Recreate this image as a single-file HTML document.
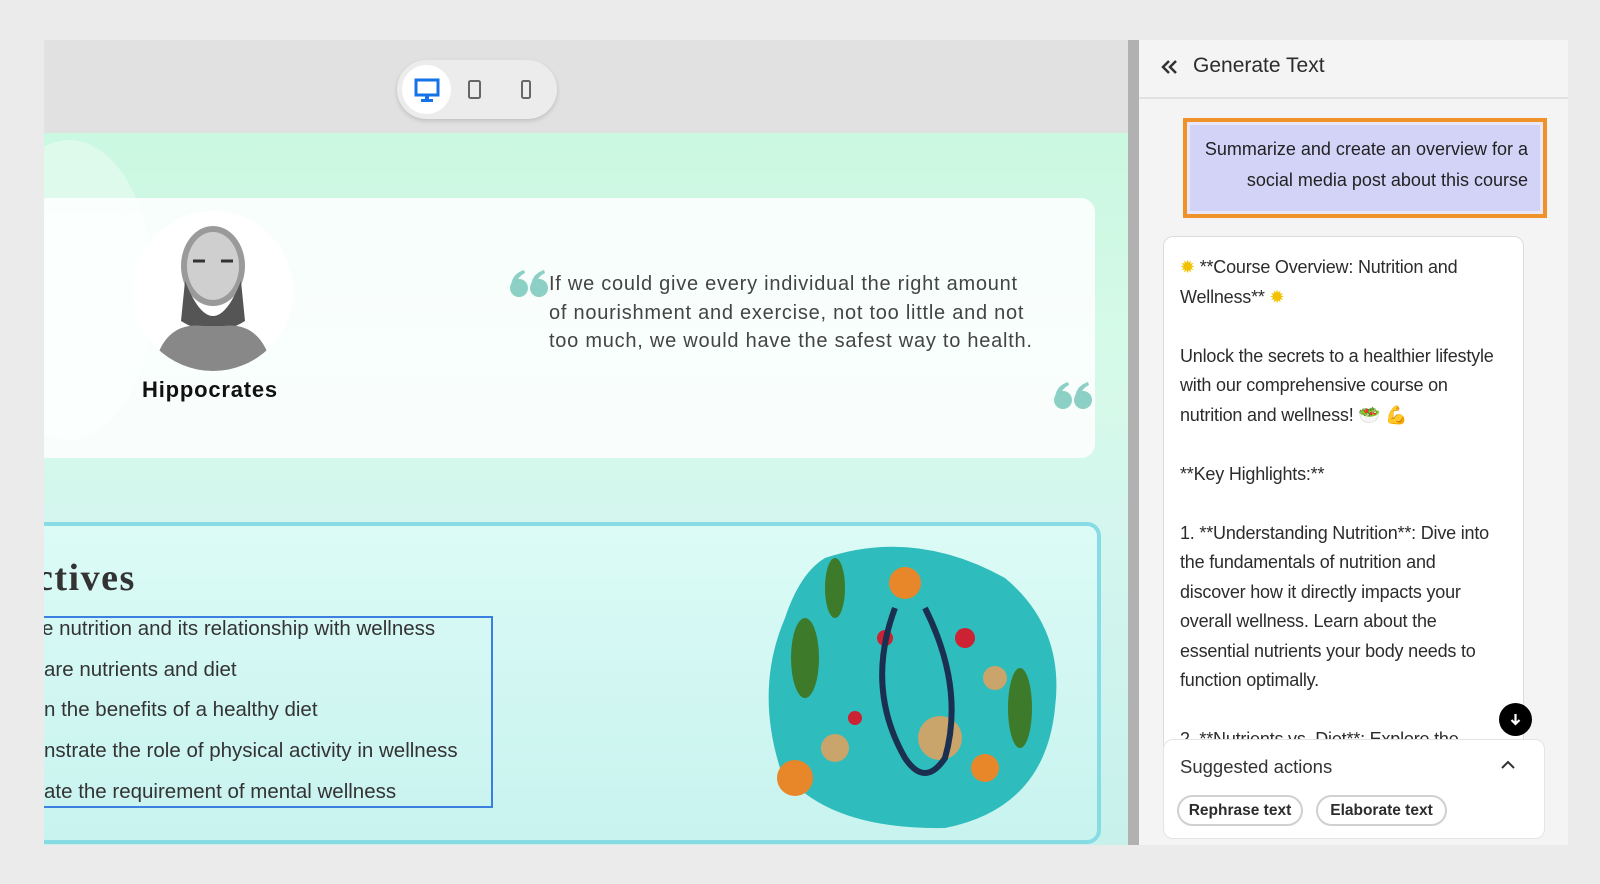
<!DOCTYPE html>
<html><head><meta charset="utf-8"><style>
*{box-sizing:border-box;margin:0;padding:0}
body{width:1600px;height:884px;background:#ebebeb;position:relative;overflow:hidden;font-family:"Liberation Sans",sans-serif}
.abs{position:absolute}
#canvas{left:44px;top:40px;width:1084px;height:805px;overflow:hidden;background:linear-gradient(180deg,#c6f7dd 0%,#d6fae9 40%,#d4f6ee 60%,#c8f1ec 100%)}
#toolbar{left:0;top:0;width:1084px;height:93px;background:#e1e1e1}
.pill{left:353px;top:20px;width:160px;height:59px;border-radius:30px;background:#ececec;box-shadow:0 2px 5px rgba(0,0,0,.15)}
.q{color:#444;font-size:20px;line-height:28.5px;letter-spacing:.75px;white-space:nowrap}
.li{font-size:20.5px;color:#333;left:0;white-space:nowrap}
.side{left:1139px;top:40px;width:429px;height:805px;background:#f4f4f4}
.st{font-size:18px;color:#2c2c2c;line-height:29.5px}
</style></head><body>
<div class="abs" id="canvas">
  <div class="abs" style="left:-60px;top:100px;width:170px;height:300px;border-radius:50%;background:rgba(255,255,255,.35)"></div>
  <div class="abs" id="toolbar">
    <div class="abs pill">
      <div class="abs" style="left:5px;top:5px;width:49px;height:49px;border-radius:50%;background:#fff"></div>
      <svg class="abs" style="left:16px;top:16px" width="28" height="28" viewBox="0 0 28 28"><rect x="3" y="4" width="22" height="15" fill="none" stroke="#1473e6" stroke-width="3"/><rect x="12" y="19" width="4" height="4" fill="#1473e6"/><rect x="8" y="23" width="12" height="3" fill="#1473e6"/></svg>
      <svg class="abs" style="left:70px;top:19px" width="16" height="22"><rect x="2" y="2" width="11" height="17" rx="1.5" fill="none" stroke="#666" stroke-width="2"/></svg>
      <svg class="abs" style="left:122px;top:19px" width="14" height="22"><rect x="3" y="2" width="8" height="17" rx="1.5" fill="none" stroke="#666" stroke-width="2"/></svg>
    </div>
  </div>
  <div class="abs" style="left:-10px;top:158px;width:1061px;height:260px;border-radius:14px;background:rgba(255,255,255,.85)"></div>
  <div class="abs" style="left:89px;top:171px;width:160px;height:160px;border-radius:50%;background:#fff;overflow:hidden">
    <svg width="160" height="160" viewBox="0 0 160 160"><ellipse cx="80" cy="55" rx="32" ry="40" fill="#9a9a9a"/><ellipse cx="80" cy="55" rx="26" ry="34" fill="#cfcfcf"/><path d="M52 70 Q80 140 108 70 L112 110 Q80 130 48 110Z" fill="#555"/><path d="M20 160 Q30 110 70 115 L90 115 Q130 110 140 160Z" fill="#888"/><path d="M60 50 h12 M88 50 h12" stroke="#333" stroke-width="3"/></svg>
  </div>
  <div class="abs" style="left:98px;top:337px;font-size:22px;font-weight:bold;color:#111;letter-spacing:.8px">Hippocrates</div>
  <svg class="abs" style="left:466px;top:230px" width="40" height="28" viewBox="0 0 40 28"><g fill="#8ccfc4"><circle cx="9" cy="18" r="9"/><path d="M1 18 Q1 4 14 0 L15 3 Q7 7 7 14Z"/><circle cx="29" cy="18" r="9"/><path d="M21 18 Q21 4 34 0 L35 3 Q27 7 27 14Z"/></g></svg>
  <div class="abs q" style="left:505px;top:230px">If we could give every individual the right amount<br>of nourishment and exercise, not too little and not<br>too much, we would have the safest way to health.</div>
  <svg class="abs" style="left:1010px;top:342px" width="40" height="28" viewBox="0 0 40 28"><g fill="#8ccfc4"><circle cx="9" cy="18" r="9"/><path d="M1 18 Q1 4 14 0 L15 3 Q7 7 7 14Z"/><circle cx="29" cy="18" r="9"/><path d="M21 18 Q21 4 34 0 L35 3 Q27 7 27 14Z"/></g></svg>
  <div class="abs" style="left:-20px;top:482px;width:1077px;height:322px;border:4px solid #86dbe4;border-radius:14px;background:linear-gradient(180deg,#dcfbf6,#c8f3ef)"></div>
  <div class="abs" style="left:-8px;top:516px;font-size:38px;font-weight:bold;color:#333;font-family:'Liberation Serif',serif;letter-spacing:1.5px">ctives</div>
  <div class="abs" style="left:-4px;top:576px;width:453px;height:192px;border:2px solid #3b7fe0"></div>
  <div class="abs li" style="top:577px;left:-2px">e nutrition and its relationship with wellness</div>
  <div class="abs li" style="top:618px">are nutrients and diet</div>
  <div class="abs li" style="top:658px">n the benefits of a healthy diet</div>
  <div class="abs li" style="top:699px">nstrate the role of physical activity in wellness</div>
  <div class="abs li" style="top:740px">ate the requirement of mental wellness</div>
  <svg class="abs" style="left:721px;top:498px" width="300" height="292" viewBox="0 0 300 292">
    <path d="M60 20 Q150 -10 240 40 Q300 90 290 170 Q280 270 180 290 Q60 292 15 230 Q-10 150 20 80 Q35 35 60 20Z" fill="#2fbcbc"/>
    <g fill="#3d7a2a"><ellipse cx="40" cy="120" rx="14" ry="40"/><ellipse cx="70" cy="50" rx="10" ry="30"/><ellipse cx="255" cy="170" rx="12" ry="40"/></g>
    <g fill="#e8862a"><circle cx="140" cy="45" r="16"/><circle cx="30" cy="240" r="18"/><circle cx="220" cy="230" r="14"/></g>
    <g fill="#c23"><circle cx="120" cy="100" r="8"/><circle cx="200" cy="100" r="10"/><circle cx="90" cy="180" r="7"/></g>
    <g fill="#c9a56b"><circle cx="175" cy="200" r="22"/><circle cx="70" cy="210" r="14"/><circle cx="230" cy="140" r="12"/></g>
    <path d="M130 70 Q100 150 140 220 Q160 250 180 220 Q200 150 160 70" fill="none" stroke="#1b3050" stroke-width="6"/>
  </svg>
</div>
<div class="abs" style="left:1128px;top:40px;width:11px;height:805px;background:#b1b1b1"></div>
<div class="abs side">
  <div class="abs" style="left:0;top:0;width:429px;height:59px;border-bottom:2px solid #e2e2e2"></div>
  <svg class="abs" style="left:21px;top:17px" width="20" height="20" viewBox="0 0 20 20"><path d="M9 4 L3 10 L9 16 M16 4 L10 10 L16 16" fill="none" stroke="#333" stroke-width="2.5"/></svg>
  <div class="abs" style="left:54px;top:14px;font-size:21px;color:#2c2c2c">Generate Text</div>
  <div class="abs" style="left:44px;top:78px;width:364px;height:100px;border:4px solid #f0922a;background:#d3d3f8;box-shadow:inset 0 0 0 3px #e8e8f8"></div>
  <div class="abs" style="left:54px;top:94px;width:335px;text-align:right;font-size:18px;line-height:30.5px;color:#222">Summarize and create an overview for a social media post about this course</div>
  <div class="abs" style="left:24px;top:196px;width:361px;height:540px;background:#fff;border:1px solid #dcdcdc;border-radius:10px;overflow:hidden">
    <div class="abs st" style="left:16px;top:16px;width:322px;letter-spacing:-.2px"><span style="color:#f2c200">✹</span> **Course Overview: Nutrition and Wellness** <span style="color:#f2c200">✹</span><br><br>Unlock the secrets to a healthier lifestyle with our comprehensive course on nutrition and wellness! 🥗 💪<br><br>**Key Highlights:**<br><br>1. **Understanding Nutrition**: Dive into the fundamentals of nutrition and discover how it directly impacts your overall wellness. Learn about the essential nutrients your body needs to function optimally.<br><br>2. **Nutrients vs. Diet**: Explore the</div>
  </div>
  <div class="abs" style="left:360px;top:663px;width:33px;height:33px;border-radius:50%;background:#000"></div>
  <svg class="abs" style="left:368px;top:671px" width="17" height="17" viewBox="0 0 17 17"><path d="M8.5 3 V13 M4.5 9 L8.5 13 L12.5 9" fill="none" stroke="#fff" stroke-width="2.2"/></svg>
  <div class="abs" style="left:24px;top:699px;width:382px;height:100px;background:#fff;border:1px solid #e4e4e4;border-radius:10px"></div>
  <div class="abs" style="left:41px;top:716px;font-size:18.5px;color:#333">Suggested actions</div>
  <svg class="abs" style="left:360px;top:718px" width="18" height="14"><path d="M3 10 L9 4 L15 10" fill="none" stroke="#333" stroke-width="2"/></svg>
  <div class="abs" style="left:38px;top:755px;width:126px;height:31px;border:2px solid #d0d0d0;border-radius:16px;font-size:15.5px;font-weight:bold;color:#2c2c2c;text-align:center;line-height:27px">Rephrase text</div>
  <div class="abs" style="left:177px;top:755px;width:131px;height:31px;border:2px solid #d0d0d0;border-radius:16px;font-size:15.5px;font-weight:bold;color:#2c2c2c;text-align:center;line-height:27px">Elaborate text</div>
</div>
</body></html>
